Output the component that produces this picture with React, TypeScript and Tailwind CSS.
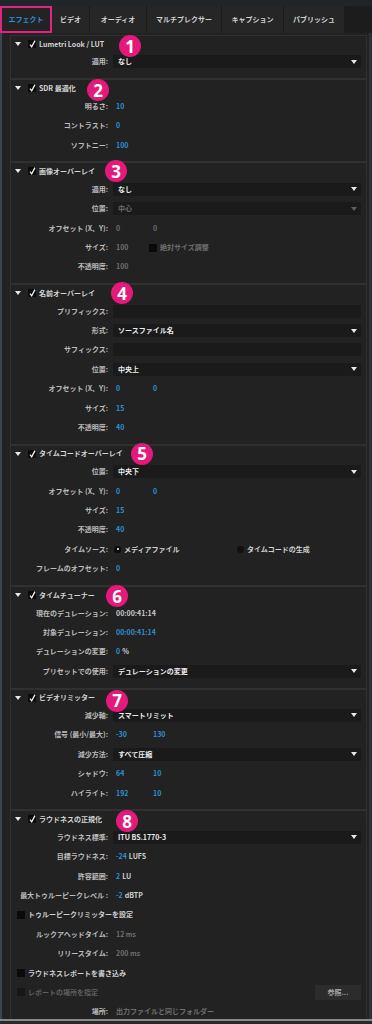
import React from "react";

function Tri({ gray }: { gray?: boolean }) {
  return (
    <svg width="6" height="4" viewBox="0 0 6 4" className="shrink-0">
      <path d="M0 0H6L3 4Z" className={gray ? "fill-[#5e5e5e]" : "fill-[#e8e8e8]"} />
    </svg>
  );
}

function Check({ checked, dim }: { checked?: boolean; dim?: boolean }) {
  return (
    <span
      className={
        "w-[8px] h-[8px] shrink-0 flex items-center justify-center " +
        (dim ? "bg-[#161616]" : "bg-[#0a0a0a]")
      }
    >
      {checked && (
        <svg width="7" height="8" viewBox="0 0 7 8">
          <path d="M1 4.6 L2.7 6.8 L6 0.6" stroke="#f2f2f2" strokeWidth="1.3" fill="none" />
        </svg>
      )}
    </span>
  );
}

function Section({
  title,
  num,
  pos,
  children,
}: {
  title: string;
  num: string;
  pos: string;
  children?: React.ReactNode;
}) {
  return (
    <div className="relative border border-[#303030] pb-[6.6px]">
      <div className="h-[16.3px] flex items-center pl-[4px]">
        <Tri />
        <span className="ml-[7px]">
          <Check checked />
        </span>
        <span className="ml-[3px] text-[#d4d4d4] whitespace-nowrap">{title}</span>
      </div>
      {children}
      <div
        className={
          "absolute w-[22px] h-[22px] rounded-full bg-[#e3197c] flex items-center justify-center text-white text-[17px] font-bold leading-none font-['Noto_Sans','Liberation_Sans',sans-serif] " +
          pos
        }
      >
        {num}
      </div>
    </div>
  );
}

function Row({ label, children }: { label: string; children?: React.ReactNode }) {
  return (
    <div className="h-[19.4px] flex items-center">
      <div className="w-[97px] shrink-0 text-right text-[#bdbdbd] whitespace-nowrap">{label}</div>
      <div className="flex-1 min-w-0 flex items-center ml-[5px] mr-[5px]">{children}</div>
    </div>
  );
}

function Drop({ value, disabled }: { value: string; disabled?: boolean }) {
  return (
    <div className="flex-1 h-[13px] bg-[#1a1a1a] flex items-center justify-between pl-[5px] pr-[4px]">
      <span className={disabled ? "text-[#6f6f6f]" : "text-[#ebebeb]"}>{value}</span>
      <Tri gray={disabled} />
    </div>
  );
}

function Input() {
  return <div className="flex-1 h-[13px] bg-[#1a1a1a]" />;
}

function V({ children, c = "blue", w }: { children: React.ReactNode; c?: "blue" | "gray" | "white"; w?: string }) {
  const color = c === "blue" ? "text-[#2b93d1]" : c === "gray" ? "text-[#6f6f6f]" : "text-[#c9c9c9]";
  return <span className={"pl-[3px] whitespace-nowrap " + color + " " + (w ?? "")}>{children}</span>;
}

function CheckRow({ label, dim, children }: { label: string; dim?: boolean; children?: React.ReactNode }) {
  return (
    <div className="h-[19.4px] flex items-center pl-[6px] pr-[5px]">
      <Check dim={dim} />
      <span className={"ml-[3px] whitespace-nowrap " + (dim ? "text-[#5f5f5f]" : "text-[#cfcfcf]")}>{label}</span>
      <div className="flex-1" />
      {children}
    </div>
  );
}

export default function App() {
  const tabs: [string, string][] = [
    ["ビデオ", "w-[38px]"],
    ["オーディオ", "w-[57px]"],
    ["マルチプレクサー", "w-[75px]"],
    ["キャプション", "w-[62px]"],
    ["パブリッシュ", "w-[61px]"],
  ];
  return (
    <div className="w-[372px] h-[1024px] overflow-hidden bg-[#1c1e21] flex flex-col font-['Noto_Sans_CJK_JP','Noto_Sans',sans-serif] font-bold text-[7px] leading-none">
      <div className="h-[6px] shrink-0 bg-[#20252a]" />
      <div className="h-[27px] shrink-0 flex bg-[#1c1c1c]">
        <div className="w-[52px] border-2 border-[#dc2680] bg-[#232323] flex items-center justify-center text-[#2b8fd0]">
          エフェクト
        </div>
        {tabs.map(([t, w]) => (
          <div
            key={t}
            className={"flex items-center justify-center bg-[#262626] border-r border-[#1b1b1b] text-[#d0d0d0] " + w}
          >
            {t}
          </div>
        ))}
      </div>
      <div className="h-[986px] shrink-0 overflow-hidden bg-[#222222] border-l-2 border-l-[#3a4651] border-r-[3px] border-r-[#2e3236] pl-[8px] pr-[2px] pt-[2px]">
        <Section title="Lumetri Look / LUT" num="1" pos="left-[108px] top-[-1px]">
          <Row label="適用:">
            <Drop value="なし" />
          </Row>
        </Section>
        <Section title="SDR 最適化" num="2" pos="left-[76px] top-[-1px]">
          <Row label="明るさ:">
            <V>10</V>
          </Row>
          <Row label="コントラスト:">
            <V>0</V>
          </Row>
          <Row label="ソフトニー:">
            <V>100</V>
          </Row>
        </Section>
        <Section title="画像オーバーレイ" num="3" pos="left-[94px] top-[-3px]">
          <Row label="適用:">
            <Drop value="なし" />
          </Row>
          <Row label="位置:">
            <Drop value="中心" disabled />
          </Row>
          <Row label="オフセット (X、Y):">
            <V c="gray" w="w-[37px]">0</V>
            <V c="gray">0</V>
          </Row>
          <Row label="サイズ:">
            <V c="gray" w="w-[36px]">100</V>
            <Check />
            <span className="ml-[3px] text-[#6f6f6f]">絶対サイズ調整</span>
          </Row>
          <Row label="不透明度:">
            <V c="gray">100</V>
          </Row>
        </Section>
        <Section title="名前オーバーレイ" num="4" pos="left-[100px] top-[-3px]">
          <Row label="プリフィックス:">
            <Input />
          </Row>
          <Row label="形式:">
            <Drop value="ソースファイル名" />
          </Row>
          <Row label="サフィックス:">
            <Input />
          </Row>
          <Row label="位置:">
            <Drop value="中央上" />
          </Row>
          <Row label="オフセット (X、Y):">
            <V w="w-[37px]">0</V>
            <V>0</V>
          </Row>
          <Row label="サイズ:">
            <V>15</V>
          </Row>
          <Row label="不透明度:">
            <V>40</V>
          </Row>
        </Section>
        <Section title="タイムコードオーバーレイ" num="5" pos="left-[120px] top-[-3px]">
          <Row label="位置:">
            <Drop value="中央下" />
          </Row>
          <Row label="オフセット (X、Y):">
            <V w="w-[37px]">0</V>
            <V>0</V>
          </Row>
          <Row label="サイズ:">
            <V>15</V>
          </Row>
          <Row label="不透明度:">
            <V>40</V>
          </Row>
          <Row label="タイムソース:">
            <div className="w-[124px] pl-[1px] flex items-center">
              <span className="w-[7px] h-[7px] rounded-full bg-[#0a0a0a] flex items-center justify-center">
                <span className="w-[2px] h-[2px] rounded-full bg-white" />
              </span>
              <span className="ml-[3px] text-[#d4d4d4]">メディアファイル</span>
            </div>
            <span className="w-[7px] h-[7px] rounded-full bg-[#111111]" />
            <span className="ml-[3px] text-[#cfcfcf]">タイムコードの生成</span>
          </Row>
          <Row label="フレームのオフセット:">
            <V>0</V>
          </Row>
        </Section>
        <Section title="タイムチューナー" num="6" pos="left-[95px] top-[-2px]">
          <Row label="現在のデュレーション:">
            <V c="white">00:00:41:14</V>
          </Row>
          <Row label="対象デュレーション:">
            <V>00:00:41:14</V>
          </Row>
          <Row label="デュレーションの変更:">
            <V>0</V>
            <span className="ml-[2px] text-[#d0d0d0]">%</span>
          </Row>
          <Row label="プリセットでの使用:">
            <Drop value="デュレーションの変更" />
          </Row>
        </Section>
        <Section title="ビデオリミッター" num="7" pos="left-[95px] top-[0px]">
          <Row label="減少軸:">
            <Drop value="スマートリミット" />
          </Row>
          <Row label="信号 (最小/最大):">
            <V w="w-[37px]">-30</V>
            <V>130</V>
          </Row>
          <Row label="減少方法:">
            <Drop value="すべて圧縮" />
          </Row>
          <Row label="シャドウ:">
            <V w="w-[37px]">64</V>
            <V>10</V>
          </Row>
          <Row label="ハイライト:">
            <V w="w-[37px]">192</V>
            <V>10</V>
          </Row>
        </Section>
        <Section title="ラウドネスの正規化" num="8" pos="left-[105px] top-[-1px]">
          <Row label="ラウドネス標準:">
            <Drop value="ITU BS.1770-3" />
          </Row>
          <Row label="目標ラウドネス:">
            <V>-24</V>
            <span className="ml-[2px] text-[#d0d0d0]">LUFS</span>
          </Row>
          <Row label="許容範囲:">
            <V>2</V>
            <span className="ml-[2px] text-[#d0d0d0]">LU</span>
          </Row>
          <Row label="最大トゥルーピークレベル :">
            <V>-2</V>
            <span className="ml-[2px] text-[#d0d0d0]">dBTP</span>
          </Row>
          <CheckRow label="トゥルーピークリミッターを設定" />
          <Row label="ルックアヘッドタイム:">
            <V c="gray">12 ms</V>
          </Row>
          <Row label="リリースタイム:">
            <V c="gray">200 ms</V>
          </Row>
          <CheckRow label="ラウドネスレポートを書き込み" />
          <CheckRow label="レポートの場所を指定" dim>
            <div className="w-[46px] h-[15px] bg-[#2c2c2c] flex items-center justify-center text-[#a8a8a8]">
              参照...
            </div>
          </CheckRow>
          <Row label="場所:">
            <V c="gray">出力ファイルと同じフォルダー</V>
          </Row>
        </Section>
      </div>
      <div className="h-[2px] shrink-0 bg-[#8a8a8a]" />
      <div className="flex-1 bg-[#2a2a2a]" />
    </div>
  );
}
